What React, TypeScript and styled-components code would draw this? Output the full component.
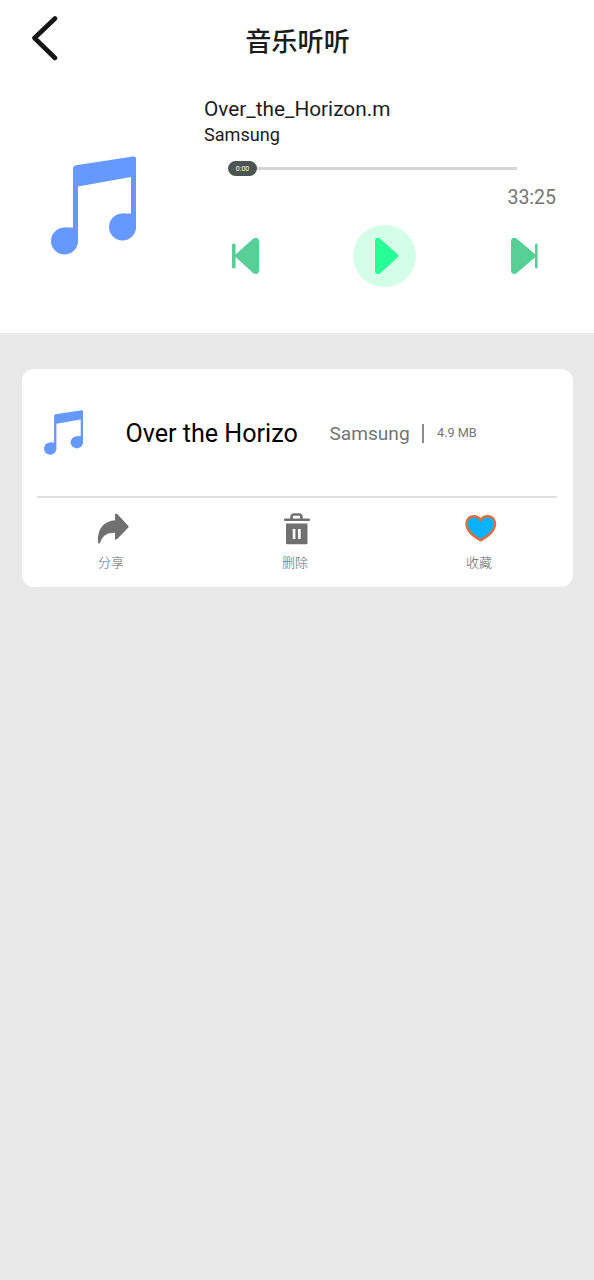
import React from 'react';
import styled, { createGlobalStyle } from 'styled-components';

const GlobalStyle = createGlobalStyle`
  * { box-sizing: border-box; }
  body {
    margin: 0;
    background: #e9e9e9;
    font-family: Roboto, 'Noto Sans CJK SC', sans-serif;
    color: #1c1c1c;
  }
  svg { display: block; flex: none; }
`;

const Page = styled.main`
  width: 594px;
  min-height: 1280px;
  background: #e9e9e9;
`;

const Header = styled.header`
  display: grid;
  grid-template-columns: 90px 1fr 90px;
  align-items: center;
  height: 80px;
  background: #fff;
`;

const BackButton = styled.button`
  padding: 0 0 4px 30px;
  border: 0;
  background: none;
`;

const Title = styled.h1`
  margin: 0 0 0 1px;
  padding-top: 4px;
  font-size: 26.2px;
  font-weight: 500;
  line-height: 40px;
  text-align: center;
`;

const Player = styled.section`
  display: flex;
  height: 253px;
  background: #fff;
`;

const Cover = styled.div`
  width: 204px;
  padding: 76px 0 0 51px;
`;

const Details = styled.div`
  display: flex;
  flex-direction: column;
  width: 352px;
  padding-top: 16px;
`;

const TrackName = styled.div`
  font-size: 20.8px;
  line-height: 26px;
  white-space: nowrap;
`;

const TrackArtist = styled.div`
  font-size: 18.1px;
  line-height: 26px;
`;

const Slider = styled.div`
  display: flex;
  align-items: center;
  width: 289px;
  height: 16px;
  margin: 12px 0 0 24px;
`;

const Thumb = styled.div`
  width: 29px;
  height: 15px;
  border-radius: 7.5px;
  background: #4c5551;
  color: #fff;
  font-size: 7px;
  line-height: 16px;
  text-align: center;
`;

const Track = styled.div`
  flex: 1;
  height: 3px;
  background: #d6d6d6;
`;

const Duration = styled.div`
  margin-top: 10px;
  align-self: flex-end;
  color: #757575;
  font-size: 19.5px;
  line-height: 24px;
`;

const Controls = styled.div`
  display: flex;
  align-items: center;
  justify-content: space-between;
  width: 307px;
  margin: 15px 0 0 27px;
`;

const PlayButton = styled.button`
  display: flex;
  align-items: center;
  width: 63px;
  height: 62px;
  padding: 0 0 0 22px;
  border: 0;
  border-radius: 50%;
  background: #d3ffe9;
`;

const SkipButton = styled.button`
  padding: 0;
  border: 0;
  background: none;
`;

const Card = styled.article`
  width: 551px;
  height: 218px;
  margin: 36px 0 0 22px;
  border-radius: 12px;
  background: #fff;
`;

const SongRow = styled.div`
  display: flex;
  align-items: center;
  height: 127px;
  padding-left: 22px;
`;

const SongTitle = styled.div`
  width: 204px;
  margin-left: 42.5px;
  padding-top: 2px;
  color: #000;
  font-size: 25.1px;
  white-space: nowrap;
`;

const SongArtist = styled.div`
  width: 92.5px;
  padding-top: 2px;
  color: #757575;
  font-size: 19.1px;
`;

const Separator = styled.div`
  width: 2px;
  height: 19px;
  margin-top: 2px;
  background: #8c8c8c;
`;

const SongSize = styled.div`
  margin-left: 13px;
  color: #757575;
  font-size: 12.7px;
`;

const Rule = styled.div`
  height: 2px;
  margin: 0 16px 0 15px;
  background: #dfdfdf;
`;

const Actions = styled.div`
  display: grid;
  grid-template-columns: repeat(3, 184px);
  margin-left: -3px;
`;

const Action = styled.button`
  display: flex;
  flex-direction: column;
  align-items: center;
  padding: 15px 0 0;
  border: 0;
  background: none;
  color: #666;
  font-family: inherit;
`;

const ActionIcon = styled.span`
  display: block;
  height: 34px;
  margin-left: 4px;
`;

const ActionLabel = styled.span`
  font-size: 13px;
  line-height: 18px;
  margin-top: 7px;
  font-weight: 300;
`;

const NoteIcon = ({ width, height }: { width: number; height: number }) => (
  <svg width={width} height={height} viewBox="0 0 85 99" preserveAspectRatio="none" fill="#6699ff">
    <path d="M22 85V13Q22 9.800 25 9.300L82 .500Q85 0 85 2.500V73H80V21L27 30.500V85Z" />
    <circle cx="13.500" cy="85" r="13.500" />
    <path d="M13.500 71.500H24V85H13.500Z" />
    <circle cx="71.500" cy="71" r="13.500" />
    <path d="M71.500 57.500H82V71H71.500Z" />
  </svg>
);

const SkipIcon = ({ forward }: { forward?: boolean }) =>
  forward ? (
    <svg width="28" height="38" viewBox="0 0 28 38" fill="#59cf98">
      <path d="M1 5Q1 .500 4.500 .800Q6 1 7.500 2.200L25.500 17.500Q26.500 19 25.500 20L7.500 35.500Q6 37 4 37Q1 37 1 33Z" />
      <rect x="25" y="6.500" width="2.600" height="25" rx="1.300" />
    </svg>
  ) : (
    <svg width="28" height="38" viewBox="0 0 28 38" fill="#59cf98">
      <path d="M28 5Q28 .500 24.500 .800Q23 1 21.500 2.200L4.500 17.500Q3.500 19 4.500 20L21.500 35.500Q23 37 25 37Q28 37 28 33Z" />
      <rect x="1" y="6.500" width="3.600" height="25" rx="1.500" />
    </svg>
  );

const ShareIcon = () => (
  <svg width="32" height="32" viewBox="0 0 32 32" fill="#707070">
    <path d="M18 2Q18-.500 20.200 1L31.200 12.700Q32 13.700 31.200 14.700L20.200 26Q18 27.500 18 25.500V19.800C11 19.500 5 22.500 3.300 29.500Q1.600 32 1 29C0 16 7 8 18 7.300Z" />
  </svg>
);

const TrashIcon = () => (
  <svg width="28" height="32" viewBox="0 0 28 32" fill="#707070">
    <path d="M8.500 6V4Q8.500 1.500 11 1.500H16Q18.500 1.500 18.500 4V6" fill="none" stroke="#707070" strokeWidth="2.600" />
    <rect x="1" y="5.500" width="26" height="2.400" rx="1" />
    <path fillRule="evenodd" d="M3 10.500H24.500V30Q24.500 31.300 23 31.300H4.500Q3 31.300 3 30ZM9.700 16V26H12.400V16ZM15 16V26H17.700V16Z" />
  </svg>
);

const HeartIcon = () => (
  <svg width="32" height="30" viewBox="0 0 32 30">
    <path
      d="M15.700 27.300C9.500 24 1.500 18.500 1.500 10.800C1.500 5.800 5 3.300 8.700 3.300C12 3.300 14.500 4.800 15.700 7.300C16.900 4.800 19.400 3.300 22.700 3.300C26.500 3.300 30 5.800 30 10.800C30 18.500 21.900 24 15.700 27.300Z"
      fill="#08b2fa"
      stroke="#df6d3e"
      strokeWidth="2.500"
      strokeLinejoin="round"
    />
  </svg>
);

const actions = [
  { label: '分享', icon: <ShareIcon /> },
  { label: '删除', icon: <TrashIcon /> },
  { label: '收藏', icon: <HeartIcon /> },
];

export default function App() {
  return (
    <Page>
      <GlobalStyle />
      <Header>
        <BackButton>
          <svg width="30" height="46" viewBox="0 0 30 46" fill="none" stroke="#171717" strokeWidth="4.600" strokeLinecap="round" strokeLinejoin="round">
            <path d="M25 3.500L4.500 23L25 43" />
          </svg>
        </BackButton>
        <Title>音乐听听</Title>
      </Header>
      <Player>
        <Cover><NoteIcon width={85} height={99} /></Cover>
        <Details>
          <TrackName>Over_the_Horizon.m</TrackName>
          <TrackArtist>Samsung</TrackArtist>
          <Slider>
            <Thumb>0:00</Thumb>
            <Track />
          </Slider>
          <Duration>33:25</Duration>
          <Controls>
            <SkipButton><SkipIcon /></SkipButton>
            <PlayButton>
              <svg width="24" height="38" viewBox="0 0 24 38" fill="#26ff96">
                <path d="M0 4Q0 .500 3 .800Q4.500 1 6 2.500L22.500 17.200Q24 19 22.500 20.500L6 35.500Q4.500 37 3 37Q0 37.500 0 34Z" />
              </svg>
            </PlayButton>
            <SkipButton><SkipIcon forward /></SkipButton>
          </Controls>
        </Details>
      </Player>
      <Card>
        <SongRow>
          <NoteIcon width={39} height={45} />
          <SongTitle>Over the Horizo</SongTitle>
          <SongArtist>Samsung</SongArtist>
          <Separator />
          <SongSize>4.9 MB</SongSize>
        </SongRow>
        <Rule />
        <Actions>
          {actions.map(({ label, icon }) => (
            <Action key={label}>
              <ActionIcon>{icon}</ActionIcon>
              <ActionLabel>{label}</ActionLabel>
            </Action>
          ))}
        </Actions>
      </Card>
    </Page>
  );
}
